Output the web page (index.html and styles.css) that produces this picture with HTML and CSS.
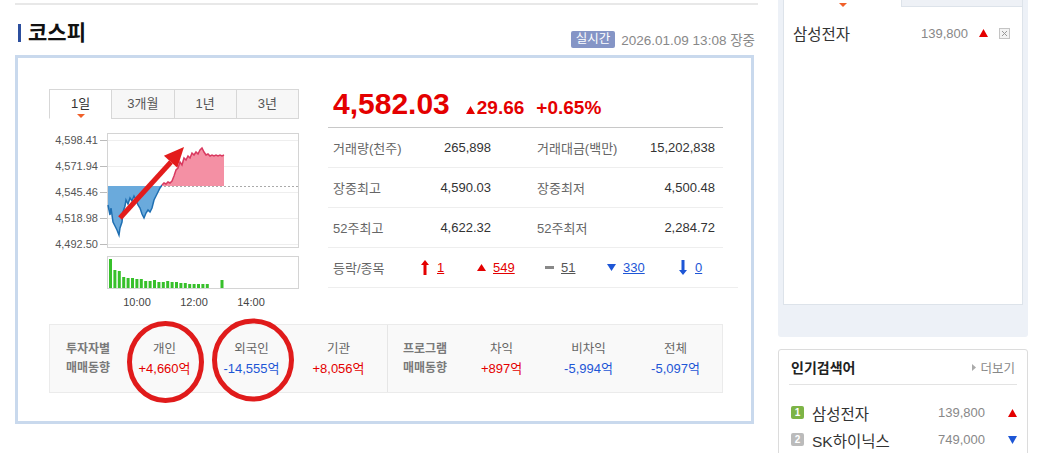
FILE: index.html
```html
<!DOCTYPE html>
<html lang="ko">

<head>
    <meta charset="UTF-8">
    <meta name="viewport" content="width=device-width, initial-scale=1.0">
    <title>코스피</title>

    <link rel="stylesheet" href="styles.css">
</head>

<body>
    <div class="page">
        <div class="main">
            <div class="rule"></div>
            <div class="head">
                <h2 class="title">코스피</h2>
                <div class="meta">
                    <span class="badge">실시간</span>
                    <span class="date">2026.01.09 13:08 장중</span>
                </div>
            </div>

            <div class="card">
                <div class="summary">
                    <div class="chart-col">
                        <div class="tabs">
                            <div class="tab on">1일</div>
                            <div class="tab">3개월</div>
                            <div class="tab">1년</div>
                            <div class="tab">3년</div>
                        </div>
                        <svg class="chart" width="250" height="180" viewBox="49 128 250 180">
                            <g fill="#555" font-size="11" text-anchor="end" font-family="Liberation Sans, sans-serif">
                                <text x="98" y="144">4,598.41</text>
                                <text x="98" y="170">4,571.94</text>
                                <text x="98" y="196">4,545.46</text>
                                <text x="98" y="222">4,518.98</text>
                                <text x="98" y="248">4,492.50</text>
                            </g>
                            <g stroke="#bbb">
                                <line x1="100" y1="140.5" x2="107" y2="140.5" />
                                <line x1="100" y1="166.5" x2="107" y2="166.5" />
                                <line x1="100" y1="192.5" x2="107" y2="192.5" />
                                <line x1="100" y1="218.5" x2="107" y2="218.5" />
                                <line x1="100" y1="244.5" x2="107" y2="244.5" />
                            </g>
                            <rect x="107.5" y="133.5" width="191" height="114" fill="#fff" stroke="#d4d4d4" />
                            <g stroke="#eee">
                                <line x1="108" y1="140.5" x2="298" y2="140.5" />
                                <line x1="108" y1="166.5" x2="298" y2="166.5" />
                                <line x1="108" y1="192.5" x2="298" y2="192.5" />
                                <line x1="108" y1="218.5" x2="298" y2="218.5" />
                                <line x1="108" y1="244.5" x2="298" y2="244.5" />
                            </g>
                            <line x1="108" y1="186.5" x2="298" y2="186.5" stroke="#aaa" stroke-dasharray="2 2" />

                            <!-- below previous close -->
                            <polygon fill="#6aaadc" points="108,186 108,205 110,215 111,208 113,222 115,226 117,230 119,235 120,228 122,222 123,212 125,206 126,200 128,204 130,198 132,201 134,196 136,200 138,205 140,208 142,214 144,218 146,213 148,210 150,212 152,208 154,200 156,196 158,192 160,188 162,186" />
                            <polyline fill="none" stroke="#1f6fb2" stroke-width="1.5" points="108,205 110,215 111,208 113,222 115,226 117,230 119,235 120,228 122,222 123,212 125,206 126,200 128,204 130,198 132,201 134,196 136,200 138,205 140,208 142,214 144,218 146,213 148,210 150,212 152,208 154,200 156,196 158,192 160,188 162,185" />

                            <!-- above previous close -->
                            <polygon fill="#f490a4" points="162,186 162,185 164,183 166,184 168,182 170,183 172,181 174,176 176,170 178,168 180,162 182,165 184,158 186,160 188,156 190,158 192,153 194,155 196,152 198,154 200,150 202,148 204,152 206,155 208,154 210,156 212,155 214,156 216,155 218,156 220,155 222,156 224,155 224,186" />
                            <polyline fill="none" stroke="#d93a60" stroke-width="1.5" points="162,185 164,183 166,184 168,182 170,183 172,181 174,176 176,170 178,168 180,162 182,165 184,158 186,160 188,156 190,158 192,153 194,155 196,152 198,154 200,150 202,148 204,152 206,155 208,154 210,156 212,155 214,156 216,155 218,156 220,155 222,156 224,155" />

                            <line x1="120" y1="218" x2="171" y2="162" stroke="#e31c1c" stroke-width="5" />
                            <polygon fill="#e31c1c" points="184,147 177.3,167.8 163.9,155.8" />

                            <rect x="107.5" y="256.5" width="191" height="32" fill="#fff" stroke="#d4d4d4" />
                            <path stroke="#37c02b" stroke-width="3" d="M110.5 288V259 M114.9 288V270 M119.3 288V271 M123.7 288V277 M128.1 288V278 M132.5 288V278 M136.9 288V279 M141.3 288V279 M145.7 288V281 M150.1 288V281 M154.5 288V280 M158.9 288V282 M163.3 288V282 M167.7 288V281 M172.1 288V282 M176.5 288V282 M180.9 288V283 M185.3 288V283 M189.7 288V284 M194.1 288V284 M198.5 288V284 M202.9 288V284 M207.3 288V284 M222 288V280" />

                            <g fill="#444" font-size="11" text-anchor="middle" font-family="Liberation Sans, sans-serif">
                                <text x="137" y="306">10:00</text>
                                <text x="194" y="306">12:00</text>
                                <text x="251" y="306">14:00</text>
                            </g>
                        </svg>
                    </div>

                    <div class="info-col">
                        <div class="price">
                            <span class="now">4,582.03</span>
                            <span class="chg"><svg width="9" height="8" viewBox="0 0 9 8"><polygon points="4.5,0 9,8 0,8" fill="#e40000" /></svg>29.66</span>
                            <span class="rate">+0.65%</span>
                        </div>
                        <div class="stat-row">
                            <span class="lbl">거래량(천주)</span>
                            <span class="val">265,898</span>
                            <span></span>
                            <span class="lbl">거래대금(백만)</span>
                            <span class="val">15,202,838</span>
                        </div>
                        <div class="stat-row">
                            <span class="lbl">장중최고</span>
                            <span class="val">4,590.03</span>
                            <span></span>
                            <span class="lbl">장중최저</span>
                            <span class="val">4,500.48</span>
                        </div>
                        <div class="stat-row">
                            <span class="lbl">52주최고</span>
                            <span class="val">4,622.32</span>
                            <span></span>
                            <span class="lbl">52주최저</span>
                            <span class="val">2,284.72</span>
                        </div>
                        <div class="rise-row">
                            <span class="lbl rise-lbl">등락/종목</span>
                            <span class="cnt w1"><span class="ico"><svg width="8" height="15" viewBox="0 0 8 15"><polygon points="4,0 8,5 5.5,5 5.5,15 2.5,15 2.5,5 0,5" fill="#e40000" /></svg></span><a class="num up">1</a></span>
                            <span class="cnt w2"><span class="ico"><svg width="9" height="7" viewBox="0 0 9 7"><polygon points="4.5,0 9,7 0,7" fill="#e40000" /></svg></span><a class="num up">549</a></span>
                            <span class="cnt w3"><span class="ico"><svg width="9" height="3" viewBox="0 0 9 3"><rect width="9" height="3" fill="#888" /></svg></span><a class="num flat">51</a></span>
                            <span class="cnt w4"><span class="ico"><svg width="9" height="7" viewBox="0 0 9 7"><polygon points="0,0 9,0 4.5,7" fill="#1d56d6" /></svg></span><a class="num down">330</a></span>
                            <span class="cnt"><span class="ico"><svg width="8" height="15" viewBox="0 0 8 15"><polygon points="4,15 8,10 5.5,10 5.5,0 2.5,0 2.5,10 0,10" fill="#1d56d6" /></svg></span><a class="num down">0</a></span>
                        </div>
                    </div>
                </div>

                <div class="flow">
                    <div class="flow-half split">
                        <div class="flow-lbl">투자자별<br>매매동향</div>
                        <div class="flow-item"><span class="t">개인</span><span class="v up">+4,660억</span></div>
                        <div class="flow-item"><span class="t">외국인</span><span class="v down">-14,555억</span></div>
                        <div class="flow-item"><span class="t">기관</span><span class="v up">+8,056억</span></div>
                    </div>
                    <div class="flow-half">
                        <div class="flow-lbl">프로그램<br>매매동향</div>
                        <div class="flow-item"><span class="t">차익</span><span class="v up">+897억</span></div>
                        <div class="flow-item"><span class="t">비차익</span><span class="v down">-5,994억</span></div>
                        <div class="flow-item"><span class="t">전체</span><span class="v down">-5,097억</span></div>
                    </div>
                </div>
            </div>
        </div>

        <div class="side">
            <div class="watch">
                <div class="watch-tabs">
                    <div class="wt on"></div>
                    <div class="wt"></div>
                </div>
                <div class="watch-box">
                    <div class="watch-item">
                        <span class="name">삼성전자</span>
                        <span class="price-s">139,800</span>
                        <svg class="tri" width="9" height="8" viewBox="0 0 9 8"><polygon points="4.5,0 9,8 0,8" fill="#e40000" /></svg>
                        <span class="del"><svg width="9" height="9" viewBox="0 0 9 9"><path d="M2 2L7 7M7 2L2 7" stroke="#999" stroke-width="1" /></svg></span>
                    </div>
                </div>
            </div>

            <div class="popular">
                <div class="pop-head">
                    <span class="pop-title">인기검색어</span>
                    <span class="more"><svg width="4" height="7" viewBox="0 0 4 7"><polygon points="0,0 4,3.5 0,7" fill="#aaa" /></svg>더보기</span>
                </div>
                <ul class="pop-list">
                    <li><span class="rank first">1</span><span class="name">삼성전자</span><span class="price-s">139,800</span><svg class="tri" width="9" height="8" viewBox="0 0 9 8"><polygon points="4.5,0 9,8 0,8" fill="#e40000" /></svg></li>
                    <li><span class="rank">2</span><span class="name">SK하이닉스</span><span class="price-s">749,000</span><svg class="tri" width="9" height="8" viewBox="0 0 9 8"><polygon points="0,0 9,0 4.5,8" fill="#1d56d6" /></svg></li>
                </ul>
            </div>
        </div>

        <!-- hand drawn marks over the investor row -->
        <svg class="marks" width="1037" height="453">
            <ellipse cx="165.5" cy="362" rx="36" ry="38.5" fill="none" stroke="#e01b1b" stroke-width="5" />
            <ellipse cx="253" cy="360" rx="38.5" ry="39" fill="none" stroke="#e01b1b" stroke-width="5" />
        </svg>
    </div>
</body>

</html>
```

FILE: styles.css
```css
* {
    margin: 0;
    padding: 0;
    box-sizing: border-box;
}

body {
    font-family: "Liberation Sans", "Noto Sans CJK KR", sans-serif;
    font-size: 13px;
    color: #333;
    background: #fff;
}

.page {
    position: relative;
    display: flex;
    width: 1037px;
    height: 453px;
    overflow: hidden;
    padding-left: 15px;
}

.main {
    width: 743px;
}

.rule {
    margin-top: 3px;
    height: 2px;
    background: #e8e8e8;
}

.head {
    height: 50px;
    display: flex;
    justify-content: space-between;
}

.title {
    margin: 19px 0 0 3px;
    height: 18px;
    border-left: 3px solid #2c4f9e;
    padding-left: 7px;
    font-size: 21px;
    line-height: 18px;
    font-weight: bold;
    color: #111;
}

.meta {
    align-self: flex-end;
    display: flex;
    align-items: center;
    padding-bottom: 6px;
    margin-right: 3px;
}

.badge {
    height: 17px;
    padding: 0 5px;
    background: #8595c6;
    color: #fff;
    font-size: 12.5px;
    line-height: 17px;
    border-radius: 2px;
}

.date {
    margin-left: 6px;
    color: #888;
    font-size: 13.5px;
}

.card {
    width: 739px;
    height: 369px;
    border: 3px solid #c9d9ed;
    padding: 31px 0 0 31px;
}

.summary {
    display: flex;
    gap: 29px;
}

.chart-col {
    width: 250px;
}

.tabs {
    display: flex;
    height: 30px;
}

.tab {
    position: relative;
    flex: 1;
    border: 1px solid #d7d7d7;
    margin-left: -1px;
    background: #f7f7f7;
    color: #555;
    text-align: center;
    line-height: 28px;
    font-size: 13px;
}

.tab:first-child {
    margin-left: 0;
}

.tab.on {
    background: #fff;
    border-bottom-color: #fff;
    color: #333;
}

.tab.on::after {
    content: "";
    position: absolute;
    left: 50%;
    bottom: 0;
    margin-left: -4px;
    border-left: 4px solid transparent;
    border-right: 4px solid transparent;
    border-top: 4px solid #f0602a;
}

.chart {
    display: block;
    margin-top: 9px;
}

.info-col {
    width: 410px;
}

.price {
    width: 395px;
    height: 39px;
    display: flex;
    align-items: baseline;
    padding-left: 5px;
    border-bottom: 1px solid #c8c8c8;
    color: #e40000;
    font-weight: bold;
}

.now {
    font-size: 30px;
    line-height: 30px;
}

.chg {
    margin-left: 16px;
    font-size: 19px;
}

.chg svg {
    margin-right: 2px;
}

.rate {
    margin-left: 12px;
    font-size: 19px;
}

.stat-row {
    width: 395px;
    height: 40px;
    display: grid;
    grid-template-columns: 90px 68px 46px 90px 88px;
    align-items: center;
    padding-left: 5px;
    border-bottom: 1px solid #eee;
}

.lbl {
    color: #666;
    font-size: 13px;
}

.val {
    text-align: right;
    color: #333;
}

.rise-row {
    width: 410px;
    height: 40px;
    display: flex;
    align-items: center;
    padding-left: 5px;
    border-bottom: 1px solid #eee;
}

.rise-lbl {
    width: 88px;
}

.cnt {
    display: flex;
    align-items: center;
}

.w1 { width: 56px; }
.w2 { width: 68px; }
.w3 { width: 62px; }
.w4 { width: 72px; }

.ico {
    display: flex;
    align-items: center;
    width: 16px;
}

.num {
    text-decoration: underline;
}

.up { color: #e40000; }
.down { color: #1d56d6; }
.flat { color: #555; }

.flow {
    display: flex;
    width: 674px;
    height: 69px;
    margin-top: 16px;
    background: #f9f9f9;
    border: 1px solid #ebebeb;
}

.flow-half {
    display: grid;
    grid-template-columns: 55px repeat(3, 87px);
    align-items: center;
    padding-left: 15px;
}

.flow-half.split {
    width: 338px;
    padding-left: 16px;
    border-right: 1px solid #e6e6e6;
}

.flow-lbl {
    font-size: 12px;
    font-weight: bold;
    color: #7a7a7a;
    line-height: 19px;
}

.flow-item {
    display: flex;
    flex-direction: column;
    align-items: center;
    line-height: 19px;
}

.flow-item .t {
    color: #666;
    font-size: 12.5px;
}

.flow-item .v {
    font-size: 13px;
}

.side {
    width: 250px;
    margin-left: 20px;
}

.watch {
    height: 337px;
    background: #edf1f7;
    border-radius: 0 0 3px 3px;
    padding: 0 5px;
}

.watch-tabs {
    display: flex;
    height: 7px;
}

.wt {
    flex: 1;
    background: #eef1f6;
    border-right: 1px solid #dde3ea;
    border-bottom: 1px solid #dde3ea;
}

.wt.on {
    position: relative;
    flex: none;
    width: 119px;
    background: #fff;
    border-left: 1px solid #dde3ea;
    border-bottom: none;
}

.wt.on::after {
    content: "";
    position: absolute;
    left: 55px;
    top: 3px;
    border-left: 4px solid transparent;
    border-right: 4px solid transparent;
    border-top: 4px solid #f0602a;
}

.watch-box {
    height: 298px;
    background: #fff;
    border: 1px solid #dde3ea;
    border-top: none;
    padding: 13px 12px 0 9px;
}

.watch-item {
    display: flex;
    align-items: center;
    height: 26px;
}

.name {
    flex: 1;
    font-size: 15.5px;
    color: #333;
}

.price-s {
    color: #888;
    font-size: 13px;
}

.watch-item .tri {
    margin-left: 11px;
}

.del {
    display: flex;
    align-items: center;
    justify-content: center;
    width: 11px;
    height: 11px;
    margin-left: 11px;
    border: 1px solid #c4c4c4;
    background: #f3f3f3;
}

.popular {
    height: 120px;
    margin-top: 12px;
    background: #fff;
    border: 1px solid #dcdcdc;
    border-radius: 3px;
}

.pop-head {
    display: flex;
    justify-content: space-between;
    align-items: center;
    height: 35px;
    margin: 0 10px;
    padding: 0 2px;
    border-bottom: 1px solid #e3e3e3;
}

.pop-title {
    font-size: 14px;
    font-weight: bold;
    color: #222;
}

.more {
    display: flex;
    align-items: center;
    gap: 4px;
    color: #888;
    font-size: 12.5px;
}

.pop-list {
    list-style: none;
    padding: 14px 10px 0 12px;
}

.pop-list li {
    display: flex;
    align-items: center;
    height: 27px;
}

.rank {
    width: 13px;
    height: 13px;
    margin-right: 8px;
    border-radius: 2px;
    background: #bbb;
    color: #fff;
    font-size: 10px;
    font-weight: bold;
    line-height: 13px;
    text-align: center;
}

.rank.first {
    background: #7db446;
}

.pop-list .tri {
    margin-left: 23px;
}

.marks {
    position: absolute;
    left: 0;
    top: 0;
    pointer-events: none;
}
```
